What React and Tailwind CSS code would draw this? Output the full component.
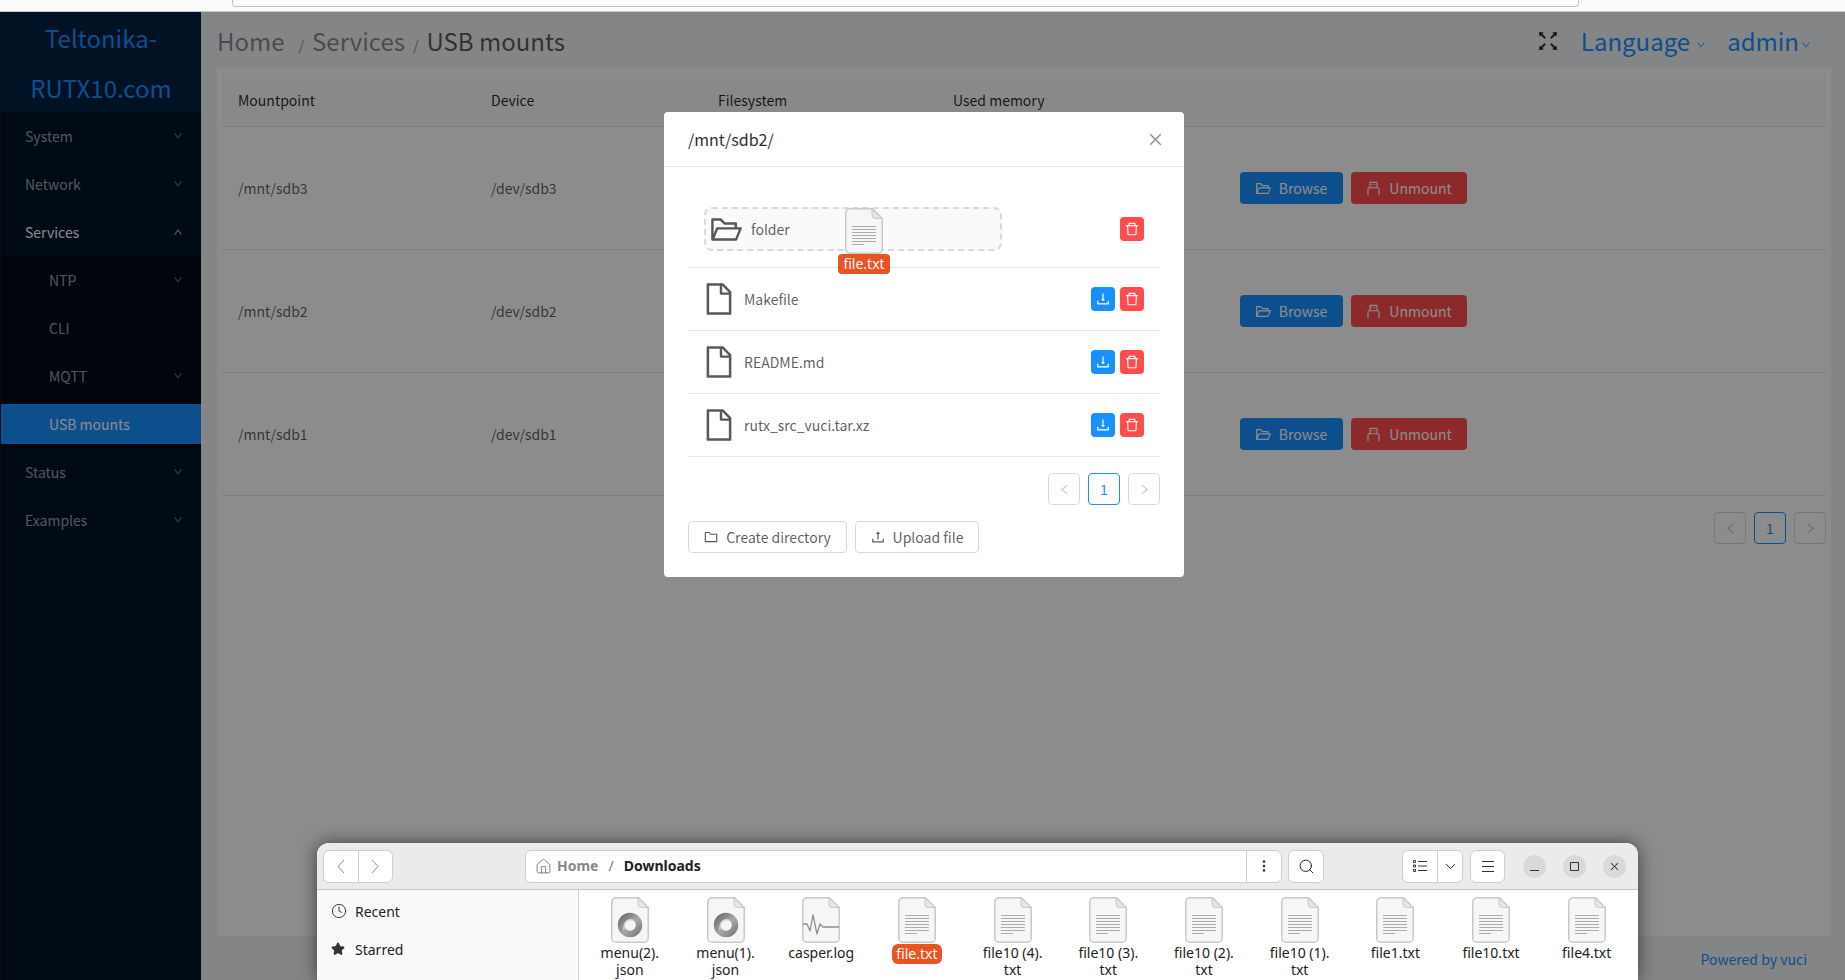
import React from 'react';
import {
  AiOutlineClose, AiOutlineDelete, AiOutlineDown, AiOutlineDownload, AiOutlineFile, AiOutlineFolder,
  AiOutlineFolderOpen, AiOutlineFullscreen, AiOutlineLeft, AiOutlineRight, AiOutlineUp, AiOutlineUpload, AiOutlineUsb,
} from 'react-icons/ai';
import { Clock, Home as HomeIcon, Search, Star } from 'lucide-react';

const sideItems = [
  { label: 'System', arrow: 'down' },
  { label: 'Network', arrow: 'down' },
  { label: 'Services', arrow: 'up', open: true },
];
const subItems = [
  { label: 'NTP', arrow: 'down' },
  { label: 'CLI' },
  { label: 'MQTT', arrow: 'down' },
  { label: 'USB mounts', active: true },
];
const mounts = [
  { path: '/mnt/sdb3', dev: '/dev/sdb3' },
  { path: '/mnt/sdb2', dev: '/dev/sdb2' },
  { path: '/mnt/sdb1', dev: '/dev/sdb1' },
];
const desktopFiles = [
  { name: ['menu(2).', 'json'], kind: 'json' },
  { name: ['menu(1).', 'json'], kind: 'json' },
  { name: ['casper.log'], kind: 'log' },
  { name: ['file.txt'], kind: 'txt', selected: true },
  { name: ['file10 (4).', 'txt'], kind: 'txt' },
  { name: ['file10 (3).', 'txt'], kind: 'txt' },
  { name: ['file10 (2).', 'txt'], kind: 'txt' },
  { name: ['file10 (1).', 'txt'], kind: 'txt' },
  { name: ['file1.txt'], kind: 'txt' },
  { name: ['file10.txt'], kind: 'txt' },
  { name: ['file4.txt'], kind: 'txt' },
];

const SideRow = ({ item, indent }) => (
  <div className="py-1">
    <div className={`h-10 flex items-center justify-between pr-[18px] ${indent ? 'pl-[48px]' : 'pl-[24px]'} ${item.active ? 'bg-[#1890ff] text-white' : item.open ? 'text-white' : 'text-white/60'}`}>
      <span>{item.label}</span>
      {item.arrow === 'down' && <AiOutlineDown size={10} />}
      {item.arrow === 'up' && <AiOutlineUp size={10} />}
    </div>
  </div>
);

const Sidebar = () => (
  <div className="w-[200px] shrink-0 bg-[#001529] text-sm">
    <div className="h-[100px] pt-px bg-[#002140] text-2xl leading-[50px] text-[#1890ff] text-center">
      Teltonika-<br />RUTX10.com
    </div>
    {sideItems.map(i => <SideRow key={i.label} item={i} />)}
    <div className="bg-[#000c17]">
      {subItems.map(i => <SideRow key={i.label} item={i} indent />)}
    </div>
    <SideRow item={{ label: 'Status', arrow: 'down' }} />
    <SideRow item={{ label: 'Examples', arrow: 'down' }} />
  </div>
);

const PageButton = ({ children, active }) => (
  <div className={`w-8 h-8 flex items-center justify-center rounded border text-sm ${active ? 'border-[#1890ff] text-[#1890ff]' : 'border-[#d9d9d9] text-black/25'} bg-white`}>
    {children}
  </div>
);

const Pager = () => (
  <div className="flex justify-end gap-2">
    <PageButton><AiOutlineLeft size={13} /></PageButton>
    <PageButton active>1</PageButton>
    <PageButton><AiOutlineRight size={13} /></PageButton>
  </div>
);

const MountTable = () => (
  <div className="flex-1 bg-white p-[5px] text-sm text-black/65">
    <div className="grid grid-cols-[253px_227px_235px_287px_1fr] h-[54px] bg-[#fafafa] border-b border-[#e8e8e8] text-black/85 items-center pl-4">
      <div>Mountpoint</div>
      <div>Device</div>
      <div>Filesystem</div>
      <div>Used memory</div>
      <div />
    </div>
    {mounts.map(m => (
      <div key={m.path} className="grid grid-cols-[253px_227px_235px_287px_1fr] h-[123px] border-b border-[#e8e8e8] items-center pl-4">
        <div>{m.path}</div>
        <div>{m.dev}</div>
        <div>ext4</div>
        <div />
        <div className="flex gap-2 text-white">
          <button className="h-8 w-[103px] rounded bg-[#1890ff] flex items-center justify-center gap-[7px] pr-px">
            <AiOutlineFolderOpen size={17} /> Browse
          </button>
          <button className="h-8 w-[116px] rounded bg-[#ff4d4f] flex items-center justify-center gap-[7px] pr-px">
            <AiOutlineUsb size={17} /> Unmount
          </button>
        </div>
      </div>
    ))}
    <div className="mt-4"><Pager /></div>
  </div>
);

const Main = () => (
  <div className="flex-1 min-w-0 flex flex-col bg-[#f0f2f5] pl-4 pr-[14px]">
    <div className="h-14 shrink-0 pt-[2px] flex items-center justify-between text-2xl">
      <div className="flex items-center text-black/45">
        <span>Home</span>
        <span className="text-sm mt-2 ml-[14px] mr-2">/</span>
        <span>Services</span>
        <span className="text-sm mt-2 ml-2 mr-2">/</span>
        <span className="text-black/65">USB mounts</span>
      </div>
      <div className="flex items-center text-[#1890ff] pr-5">
        <AiOutlineFullscreen size={26} className="text-black/85 mr-5" />
        <span>Language</span>
        <AiOutlineDown size={10} className="ml-[6px] mt-2 mr-[21px]" />
        <span>admin</span>
        <AiOutlineDown size={10} className="ml-[2px] mt-2" />
      </div>
    </div>
    <MountTable />
    <div className="h-11 shrink-0 flex items-center justify-end pt-[2px] pr-6 text-sm text-[#1890ff]">Powered by vuci</div>
  </div>
);

const SquareAction = ({ color, children }) => (
  <div className={`w-6 h-6 rounded flex items-center justify-center text-white ${color}`}>{children}</div>
);

const FileRow = ({ name }) => (
  <div className="h-[63px] border-b border-[#e8e8e8] flex items-center pl-[13px] pr-4">
    <AiOutlineFile size={36} className="text-black/65" />
    <span className="ml-[7px] flex-1">{name}</span>
    <div className="flex gap-[5px]">
      <SquareAction color="bg-[#1890ff]"><AiOutlineDownload size={16} /></SquareAction>
      <SquareAction color="bg-[#ff4d4f]"><AiOutlineDelete size={16} /></SquareAction>
    </div>
  </div>
);

const Modal = () => (
  <div className="w-[520px] ml-[664px] mt-[100px] bg-white rounded text-sm text-black/65">
    <div className="h-[55px] border-b border-[#e8e8e8] flex items-center justify-between px-6">
      <span className="text-base text-black/85">/mnt/sdb2/</span>
      <AiOutlineClose size={17} className="text-black/45 mr-[-4px]" />
    </div>
    <div className="px-6 pb-6">
      <div className="pt-10 h-[101px] border-b border-[#e8e8e8] flex items-start pl-4 pr-4">
        <div className="w-[298px] h-[44px] rounded-lg border-2 border-dashed border-[#d9d9d9] bg-[#fafafa] flex items-center pl-[3px]">
          <AiOutlineFolderOpen size={35} className="text-black/65" />
          <span className="ml-[7px]">folder</span>
        </div>
        <div className="ml-auto mt-[10px]">
          <SquareAction color="bg-[#ff4d4f]"><AiOutlineDelete size={16} /></SquareAction>
        </div>
      </div>
      <FileRow name="Makefile" />
      <FileRow name="README.md" />
      <FileRow name="rutx_src_vuci.tar.xz" />
      <div className="mt-4"><Pager /></div>
      <div className="mt-4 flex gap-2">
        <button className="h-8 w-[159px] rounded border border-[#d9d9d9] flex items-center justify-center gap-[7px] pr-px">
          <AiOutlineFolder size={16} /> Create directory
        </button>
        <button className="h-8 w-[124px] rounded border border-[#d9d9d9] flex items-center justify-center gap-[7px] pr-px">
          <AiOutlineUpload size={16} /> Upload file
        </button>
      </div>
    </div>
  </div>
);

// Yaru style document icon, the body changes with the file kind
const DocIcon = ({ kind }) => (
  <svg width="38" height="46" viewBox="0 0 38 46" fill="none">
    <defs>
      <linearGradient id="ringGrad" x1="0" y1="0" x2="1" y2="1">
        <stop offset="0" stopColor="#6f6f6f" />
        <stop offset="0.55" stopColor="#a9a9a9" />
        <stop offset="1" stopColor="#7c7c7c" />
      </linearGradient>
    </defs>
    <path d="M5 .75h22.5L37.25 10.5V41a4.25 4.25 0 0 1-4.25 4.25H5A4.25 4.25 0 0 1 .75 41V5A4.25 4.25 0 0 1 5 .75z" fill="#f6f6f6" stroke="#c9c9c9" strokeWidth="1.5" />
    <path d="M27 1v6a3.5 3.5 0 0 0 3.5 3.5H37z" fill="#e6e6e6" stroke="#c9c9c9" />
    {kind === 'txt' && (
      <g stroke="#ababab">
        {[18, 21, 24, 27, 30, 33].map(y => <path key={y} d={`M7 ${y + 0.5}h24`} />)}
        <path d="M7 36.5h12" />
      </g>
    )}
    {kind === 'json' && (
      <g>
        <circle cx="19" cy="28" r="9" stroke="url(#ringGrad)" strokeWidth="6.5" />
        <path d="M13 33c-1-6 3-11 9-10" stroke="#d8d8d8" strokeWidth="1.4" />
      </g>
    )}
    {kind === 'log' && (
      <path d="M1 27h4l3 7 3-16 4 19 3-10 3 3h16" stroke="#8f8f8f" strokeWidth="1.3" strokeLinejoin="round" />
    )}
  </svg>
);

const ToolBtn = ({ className, children }) => (
  <div className={`h-[33px] rounded-md border border-[#cdcdcd] bg-white flex items-center ${className}`}>{children}</div>
);

const FileManager = () => (
  <div className="absolute left-[317px] top-[843px] w-[1321px] h-[137px] rounded-t-xl bg-white overflow-hidden shadow-[0_0_18px_rgba(0,0,0,0.55)] font-['Noto_Sans',sans-serif] text-[14px] text-[#222]">
    <div className="h-[47px] bg-[#ebebeb] border-b border-[#c4c4c4] flex items-center pl-[6px]">
      <ToolBtn className="w-[70px] text-[#8a8a8a]">
        <div className="flex-1 flex justify-center border-r border-[#cdcdcd] h-full items-center">
          <svg width="8" height="15" viewBox="0 0 8 15" fill="none" stroke="#8a8a8a"><path d="M7 1 1 7.5 7 14" /></svg>
        </div>
        <div className="flex-1 flex justify-center">
          <svg width="8" height="15" viewBox="0 0 8 15" fill="none" stroke="#8a8a8a"><path d="M1 1l6 6.5L1 14" /></svg>
        </div>
      </ToolBtn>
      <ToolBtn className="ml-[132px] w-[757px]">
        <div className="flex-1 flex items-center pl-[9px] font-bold text-[14px]">
          <HomeIcon size={17} strokeWidth={1.3} className="text-[#777]" />
          <span className="ml-[5px] mb-px text-[#888]">Home</span>
          <span className="mx-[10px] mb-px font-normal text-[#777]">/</span>
          <span className="mb-px">Downloads</span>
        </div>
        <div className="w-[35px] h-full border-l border-[#cdcdcd] flex items-center justify-center">
          <svg width="4" height="14" viewBox="0 0 4 14" fill="#333"><circle cx="2" cy="2.5" r="1.3" /><circle cx="2" cy="7" r="1.3" /><circle cx="2" cy="11.5" r="1.3" /></svg>
        </div>
      </ToolBtn>
      <ToolBtn className="ml-[6px] w-9 justify-center"><Search size={17} strokeWidth={1.4} /></ToolBtn>
      <ToolBtn className="ml-[78px] w-[61px]">
        <div className="w-[35px] h-full border-r border-[#cdcdcd] flex items-center justify-center">
          <svg width="14" height="12" viewBox="0 0 14 12" fill="none" stroke="#333"><path d="M5 1.5h9M5 6h9M5 10.5h9" /><path d="M.5.5h2v2h-2zM.5 5h2v2h-2zM.5 9.5h2v2h-2z" /></svg>
        </div>
        <div className="flex-1 flex justify-center">
          <svg width="11" height="7" viewBox="0 0 11 7" fill="none" stroke="#333"><path d="M1 1l4.5 4.5L10 1" /></svg>
        </div>
      </ToolBtn>
      <ToolBtn className="ml-[7px] w-[35px] justify-center">
        <svg width="12" height="11" viewBox="0 0 12 11" stroke="#333"><path d="M0 .5h12M0 5.5h12M0 10.5h12" /></svg>
      </ToolBtn>
      <div className="ml-[18px] flex gap-[17px]">
        <div className="w-[23px] h-[23px] rounded-full bg-[#d9d9d9] flex items-center justify-center">
          <svg width="9" height="9" viewBox="0 0 9 9" stroke="#333"><path d="M0 8.5h9" /></svg>
        </div>
        <div className="w-[23px] h-[23px] rounded-full bg-[#d9d9d9] flex items-center justify-center">
          <svg width="9" height="9" viewBox="0 0 9 9" stroke="#333" fill="none"><path d="M.5.5h8v8h-8z" /></svg>
        </div>
        <div className="w-[23px] h-[23px] rounded-full bg-[#d9d9d9] flex items-center justify-center">
          <AiOutlineClose size={11} className="text-[#333]" />
        </div>
      </div>
    </div>
    <div className="flex">
      <div className="w-[262px] h-[90px] shrink-0 bg-[#fafafa] border-r border-[#d4d4d4] pl-[14px] pt-[11px]">
        <div className="h-[20px] flex items-center">
          <Clock size={16} strokeWidth={1.3} />
          <span className="ml-[8px]">Recent</span>
        </div>
        <div className="h-[20px] mt-[18px] flex items-center">
          <Star size={14} fill="#333" stroke="#333" />
          <span className="ml-[10px]">Starred</span>
        </div>
      </div>
      <div className="flex pl-[3px] pt-[7px]">
        {desktopFiles.map(f => (
          <div key={f.name.join('')} className="w-[95.7px] flex flex-col items-center leading-[17px] text-center">
            <DocIcon kind={f.kind} />
            <div className={`px-1 mt-px ${f.selected ? 'bg-[#e95420] text-white rounded-md h-5 leading-5' : ''}`}>
              {f.name.map(l => <div key={l}>{l}</div>)}
            </div>
          </div>
        ))}
      </div>
    </div>
  </div>
);

const DragGhost = () => (
  <div className="absolute left-[838px] top-[208px] w-[52px] flex flex-col items-center font-['Noto_Sans',sans-serif] text-[14px]">
    <DocIcon kind="txt" />
    <div className="h-5 w-[52px] rounded bg-[#e95420] text-white text-center leading-5">file.txt</div>
  </div>
);

const App = () => (
  <div className="relative h-[980px] overflow-hidden bg-[#1c1416] pl-px font-['Noto_Sans_CJK_SC',sans-serif]">
    <div className="h-3 bg-[#fbfbfb] border-b border-[#c8c8c8] ml-[-1px]">
      <div className="ml-[232px] w-[1347px] h-[7px] bg-white border border-t-0 border-[#c4c4c4] rounded-b" />
    </div>
    <div className="flex h-[968px]">
      <Sidebar />
      <Main />
    </div>
    <div className="absolute top-3 left-0 right-0 bottom-0 bg-black/45">
      <Modal />
    </div>
    <DragGhost />
    <FileManager />
  </div>
);

export default App;
